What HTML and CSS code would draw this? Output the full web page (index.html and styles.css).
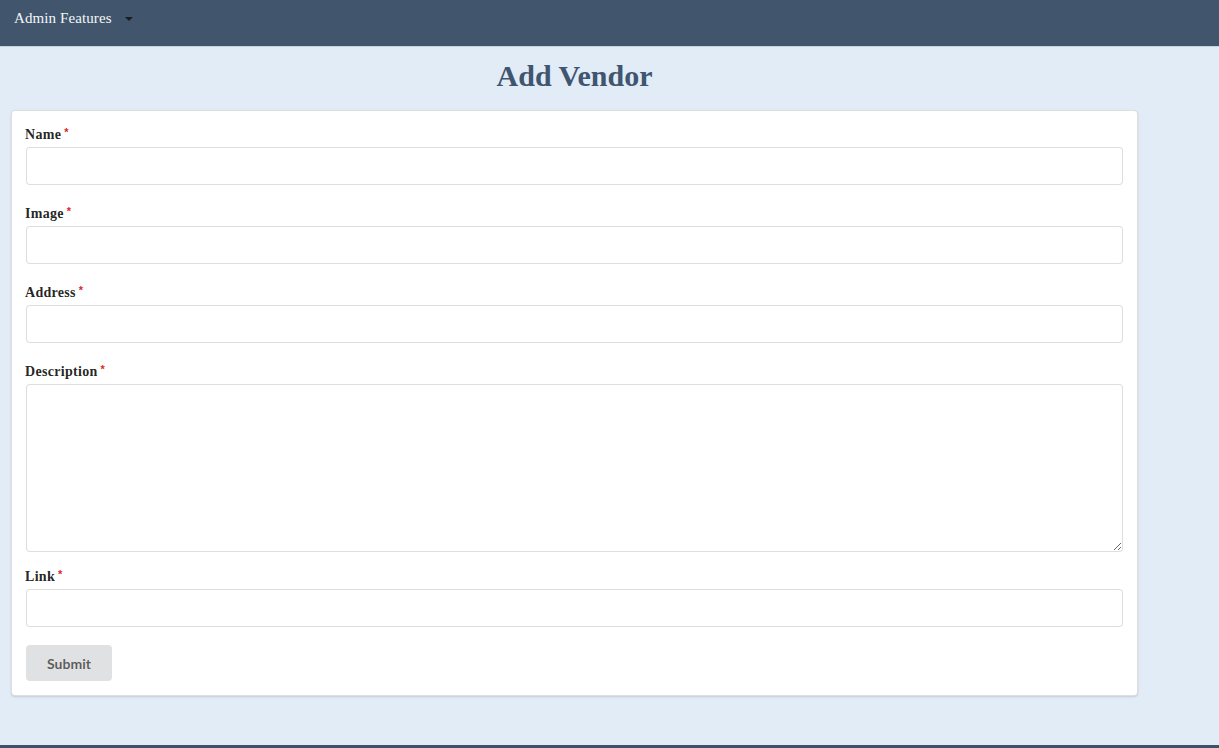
FILE: index.html
```html
<!DOCTYPE html>
<html>
<head>
<meta charset="utf-8">
<link rel="stylesheet" href="styles.css">
</head>
<body>
<div class="page">
  <nav class="navbar">
    <div class="menu-item">Admin Features <span class="caret"></span></div>
  </nav>
  <main class="main">
    <div class="container">
      <h1 class="title">Add Vendor</h1>
      <form class="card">
        <div class="field">
          <label class="label">Name</label>
          <input class="input" type="text">
        </div>
        <div class="field">
          <label class="label">Image</label>
          <input class="input" type="text">
        </div>
        <div class="field">
          <label class="label">Address</label>
          <input class="input" type="text">
        </div>
        <div class="field field-area">
          <label class="label">Description</label>
          <textarea class="textarea"></textarea>
        </div>
        <div class="field field-last">
          <label class="label">Link</label>
          <input class="input" type="text">
        </div>
        <button class="button" type="button">Submit</button>
      </form>
    </div>
  </main>
  <footer class="footer"></footer>
</div>
</body>
</html>
```
FILE: styles.css
```css
html, body {
  margin: 0;
  padding: 0;
}
body {
  background: #e2ecf6;
  font-family: "Liberation Serif", "Times New Roman", serif;
}
.page {
  height: 748px;
  display: flex;
  flex-direction: column;
}
.navbar {
  height: 46px;
  background: #41566d;
  border-bottom: 1px solid #c9d3de;
  display: flex;
  align-items: center;
  padding-left: 14px;
  flex-shrink: 0;
}
.menu-item {
  color: #f4f6f8;
  font-size: 15px;
  letter-spacing: 0.1px;
  display: flex;
  align-items: center;
  margin-top: -10px;
}
.caret {
  display: inline-block;
  width: 0;
  height: 0;
  border-left: 4px solid transparent;
  border-right: 4px solid transparent;
  border-top: 4px solid #1b1c1d;
  margin-left: 13px;
  margin-top: 1px;
}
.main {
  flex: 1;
}
.container {
  width: 1127px;
  margin-left: 11px;
}
.title {
  margin: 11px 0 16px;
  text-align: center;
  font-size: 30px;
  line-height: 36px;
  font-weight: 700;
  color: #3f5570;
}
.card {
  background: #fff;
  border: 1px solid rgba(34, 36, 38, 0.15);
  border-radius: 4px;
  box-shadow: 0 1px 2px 0 rgba(34, 36, 38, 0.15);
  padding: 16px 14px 14px;
}
.field {
  margin-bottom: 21px;
}
.label {
  display: block;
  font-size: 14px;
  line-height: 16px;
  font-weight: 700;
  letter-spacing: 0.3px;
  color: rgba(0, 0, 0, 0.87);
  margin-bottom: 4px;
  margin-left: -1px;
}
.label::after {
  content: "*";
  color: #db2828;
  font-size: 11px;
  vertical-align: top;
  margin: -3px 0 0 3px;
  display: inline-block;
  font-family: "Liberation Sans", sans-serif;
}
.input, .textarea {
  display: block;
  box-sizing: border-box;
  width: 100%;
  border: 1px solid rgba(34, 36, 38, 0.15);
  border-radius: 4px;
  background: #fff;
  font-family: "Lato", sans-serif;
  font-size: 14px;
  padding: 9px 14px;
  outline: none;
  margin: 0;
}
.input {
  height: 38px;
}
.textarea {
  height: 168px;
  resize: vertical;
}
.field-area {
  margin-bottom: 17px;
}
.field-last {
  margin-bottom: 18px;
}
.button {
  display: block;
  width: 86px;
  height: 36px;
  border: none;
  border-radius: 4px;
  background: #e0e1e2;
  color: rgba(0, 0, 0, 0.6);
  font-family: "Lato", sans-serif;
  font-weight: 700;
  font-size: 14px;
  padding: 0;
  margin: 0;
}
.footer {
  height: 3px;
  background: #3e5168;
  flex-shrink: 0;
}
```
